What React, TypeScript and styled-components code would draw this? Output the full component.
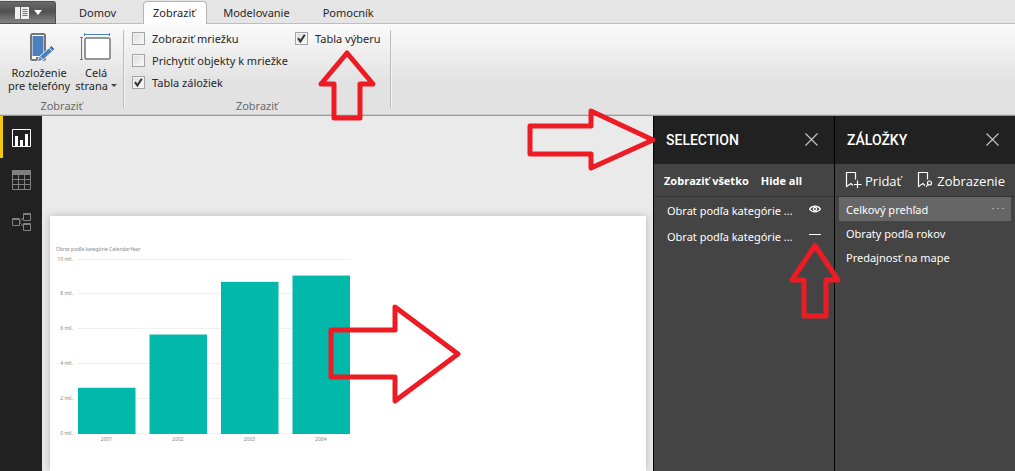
import React from 'react';
import styled, { createGlobalStyle } from 'styled-components';

const uiFont = `"Noto Sans", "Open Sans", sans-serif`;

const GlobalStyle = createGlobalStyle`
  *, *::before, *::after { box-sizing: border-box; }
  body { margin: 0; background: #eaeaea; font-family: ${uiFont}; font-size: 11px; color: #262626; }
  button, input { font: inherit; color: inherit; margin: 0; }
  button { border: 0; padding: 0; background: none; }
  ul { list-style: none; margin: 0; padding: 0; }
  h2, h3, p { margin: 0; }
`;

const Window = styled.div`
  position: relative;
  display: flex;
  flex-direction: column;
  min-height: 100vh;
  overflow: hidden;
`;

/* ---------- Ribbon ---------- */

const TabStrip = styled.nav`
  display: flex;
  align-items: flex-end;
  height: 24px;
  background: #e5e5e5;
  box-shadow: inset 0 -1px #bdbdbd;
`;

const FileButton = styled.button`
  display: flex;
  align-items: center;
  gap: 5px;
  width: 56px;
  height: 23px;
  margin-right: 7px;
  padding-left: 15px;
  border: 1px solid #4f4f4f;
  border-left: 0;
  border-radius: 0 3px 0 0;
  background: linear-gradient(#6a6a6a, #515151 45%, #848484);
`;

const Tab = styled.button<{ $active?: boolean }>`
  height: ${p => (p.$active ? 23 : 22)}px;
  margin-left: ${p => (p.$active ? 10 : 0)}px;
  padding: ${p => (p.$active ? '0 11px 0 9px' : '0 17px 1px 16px')};
  line-height: 22px;
  border: ${p => (p.$active ? '1px solid #b5b5b5' : '0')};
  border-bottom: 0;
  border-radius: 4px 4px 0 0;
  background: ${p => (p.$active ? '#fdfdfd' : 'transparent')};
`;

const Ribbon = styled.section`
  display: flex;
  height: 92px;
  padding-top: 6px;
  border-bottom: 1px solid #999;
  background: linear-gradient(#fbfbfb, #ededed 35%, #e2e2e2 65%, #e2e2e2);
  box-shadow: inset 0 -1px #cfcfcf;
`;

const Group = styled.div<{ $width: number }>`
  display: flex;
  flex-direction: column;
  justify-content: space-between;
  width: ${p => p.$width}px;
  height: 78px;
  border-right: 1px solid #bdbdbd;
  box-shadow: 1px 0 #f2f2f2;
`;

const GroupName = styled.p`
  height: 14px;
  margin-bottom: -5px;
  line-height: 14px;
  text-align: center;
  color: #6a6a6a;
`;

const LargeButtons = styled.div`
  display: flex;
  gap: 5px;
  padding-left: 8px;
`;

const LargeButton = styled.button`
  display: flex;
  flex-direction: column;
  align-items: center;
  line-height: 13px;
  white-space: nowrap;
  svg { margin-bottom: 4px; }
`;

const Caret = styled.span`
  display: inline-block;
  margin-left: 3px;
  vertical-align: 3px;
  border: solid transparent;
  border-width: 3px 3px 0;
  border-top-color: #444;
`;

const Checks = styled.div`
  display: grid;
  grid-template-columns: 163px auto;
  grid-auto-flow: column;
  grid-template-rows: repeat(3, 22px);
  align-items: start;
  padding: 2px 0 0 8px;
`;

const CheckLabel = styled.label`
  display: flex;
  align-items: center;
  gap: 7px;
  height: 13px;
  white-space: nowrap;
`;

const CheckBox = styled.span`
  display: grid;
  > * { grid-area: 1 / 1; }
  svg { pointer-events: none; }
`;

const CheckInput = styled.input`
  appearance: none;
  width: 13px;
  height: 13px;
  border: 1px solid #a3a3a3;
  background: linear-gradient(135deg, #dcdcdc, #fafafa);
  box-shadow: inset 0 0 0 1px #f4f4f4;
  & + svg { visibility: hidden; }
  &:checked + svg { visibility: visible; }
`;

function Check({ label, on }: { label: string; on?: boolean }) {
  return (
    <CheckLabel>
      <CheckBox>
        <CheckInput type="checkbox" defaultChecked={on} />
        <svg width="13" height="13" viewBox="0 0 13 13" fill="none" stroke="#333" strokeWidth="2">
          <path d="M3 6.2L5.4 9.4L9.8 2.8" />
        </svg>
      </CheckBox>
      {label}
    </CheckLabel>
  );
}

/* ---------- Workspace ---------- */

const Workspace = styled.div`
  display: flex;
  flex: 1;
`;

const SideNav = styled.nav`
  display: flex;
  flex-direction: column;
  width: 42px;
  background: #212121;
`;

const ViewButton = styled.button<{ $active?: boolean }>`
  display: grid;
  place-items: center;
  height: 42px;
  padding-top: 2px;
  padding-right: ${p => (p.$active ? 2 : 0)}px;
  border-left: ${p => (p.$active ? '3px solid #f2c80f' : '0')};
`;

const Canvas = styled.main`
  display: flex;
  flex: 1;
  min-width: 0;
  padding: 100px 7px 0 8px;
  background: #eaeaea;
`;

const ReportPage = styled.div`
  flex: 1;
  min-width: 0;
  padding: 30px 0 0 6px;
  background: #fff;
  box-shadow: 0 0 8px #b8b8b8;
`;

const ChartTitle = styled.h3`
  height: 7px;
  font: 400 5px/7px ${uiFont};
  color: #888;
`;

const Chart = styled.svg`
  display: block;
  max-width: 100%;
  font: 5px ${uiFont};
  fill: #888;
`;

const bars = [
  { year: '2001', value: 2.65 },
  { year: '2002', value: 5.7 },
  { year: '2003', value: 8.72 },
  { year: '2004', value: 9.08 },
];

function RevenueChart() {
  const base = 181;
  const unit = 17.45;
  return (
    <Chart width="300" height="192" viewBox="0 0 300 192" role="img" aria-label="Obrat podľa kategórie CalendarYear">
      {[0, 2, 4, 6, 8, 10].map(v => {
        const y = Math.round(base - v * unit);
        return (
          <g key={v}>
            <rect x="22" y={y - 1} width="272" height="1" fill="#f1f1f1" />
            <text x="17" y={y + 1} textAnchor="end">{v} mil.</text>
          </g>
        );
      })}
      {bars.map((b, i) => {
        const h = b.value * unit;
        const x = 22 + i * 71.5;
        return (
          <g key={b.year}>
            <rect x={x} y={base - h} width="57.5" height={h} fill="#01b8aa" />
            <text x={x + 28.5} y={base + 7} textAnchor="middle">{b.year}</text>
          </g>
        );
      })}
    </Chart>
  );
}

/* ---------- Panes ---------- */

const Pane = styled.aside`
  flex: none;
  width: 181px;
  border-left: 1px solid #000;
  background: #444;
  color: #fff;
`;

const PaneHeader = styled.header`
  display: flex;
  align-items: center;
  justify-content: space-between;
  height: 48px;
  padding: 0 16px 0 12px;
  background: #212121;
`;

const PaneTitle = styled.h2`
  font: 500 14px/20px Roboto, sans-serif;
`;

const PaneTools = styled.div<{ $gap: number }>`
  display: flex;
  align-items: center;
  gap: ${p => p.$gap}px;
  height: 33px;
  padding: 2px 0 0 10px;
  border-bottom: 1px solid #333;
  white-space: nowrap;
`;

const BoldTool = styled.button`
  font-family: "Open Sans", sans-serif;
  font-weight: 700;
  line-height: 16px;
`;

const IconTool = styled.button`
  display: flex;
  align-items: center;
  gap: 3px;
  font-family: "Open Sans", sans-serif;
  font-size: 13px;
  line-height: 16px;
  svg { margin-bottom: 4px; }
`;

const Layers = styled.ul`
  padding: 0 13px;
`;

const Layer = styled.li`
  display: flex;
  align-items: center;
  justify-content: space-between;
  height: 26px;
  white-space: nowrap;
`;

const Bookmarks = styled.ul`
  padding: 0 4px;
`;

const Bookmark = styled.li<{ $selected?: boolean }>`
  display: flex;
  align-items: center;
  justify-content: space-between;
  height: 24px;
  padding: 0 7px;
  background: ${p => (p.$selected ? '#666' : 'transparent')};
`;

const CloseButton = () => (
  <button aria-label="Zavrieť">
    <svg width="13" height="15" viewBox="0 0 13 15" stroke="#c8c8c8" strokeWidth="1.1" display="block">
      <path d="M.5 .5L12.5 12.5M12.5 .5L.5 12.5" />
    </svg>
  </button>
);

const BookmarkIcon = ({ view }: { view?: boolean }) => (
  <svg width="17" height="17" viewBox="0 0 17 17" fill="none" stroke="#fff" strokeWidth="1.2">
    <path d={view ? 'M8 14.500L6 12.600L1.500 15.500V1.500H10.500V8.500' : 'M8 14.500L6 12.500L1.500 15.500V1.500H10.500V8.500'} />
    {view ? (
      <>
        <circle cx="12.500" cy="12" r="2" />
        <path d="M11 13.500L9 16" />
      </>
    ) : (
      <path d="M12.500 9.500V17M9 13.500H16.500" />
    )}
  </svg>
);

/* ---------- Callout arrows drawn over the window ---------- */

const Callout = styled.svg<{ $top: number; $left?: number; $right?: number }>`
  position: absolute;
  top: ${p => p.$top}px;
  ${p => (p.$left !== undefined ? `left: ${p.$left}px;` : `right: ${p.$right}px;`)}
  fill: none;
  stroke: #ed1c24;
  stroke-width: 5;
  stroke-linejoin: round;
  pointer-events: none;
`;

export default function App() {
  return (
    <Window>
      <GlobalStyle />
      <TabStrip>
        <FileButton aria-label="Súbor">
          <svg width="14" height="12" viewBox="0 0 14 12">
            <path d="M0 0H14V12H0Z" fill="#eee" />
            <path d="M5.5 0V12" stroke="#666" />
            <path d="M7.5 2.5H12.5M7.5 4.5H12.5M7.5 6.5H12.5M7.5 8.5H12.5" stroke="#777" />
          </svg>
          <svg width="8" height="5" viewBox="0 0 8 5"><path d="M0 0H8L4 5Z" fill="#fff" /></svg>
        </FileButton>
        <Tab>Domov</Tab>
        <Tab $active>Zobraziť</Tab>
        <Tab>Modelovanie</Tab>
        <Tab>Pomocník</Tab>
      </TabStrip>

      <Ribbon>
        <Group $width={124}>
          <LargeButtons>
            <LargeButton>
              <svg width="32" height="32" viewBox="0 0 32 32">
                <rect x="8" y="4" width="14" height="26" rx="1.5" fill="#fff" stroke="#777" strokeWidth="2" />
                <rect x="9.500" y="6" width="11" height="20" fill="#4a80bd" />
                <path d="M13 28H17" stroke="#777" strokeWidth="2" />
                <path d="M14 32L16.500 26.500L28.500 15.500L32 19L20 30Z" fill="#4a80bd" stroke="#eee" />
                <path d="M26 18L29.500 21.500M17 26.500L20 30" stroke="#eee" />
              </svg>
              <span>Rozloženie<br />pre telefóny</span>
            </LargeButton>
            <LargeButton>
              <svg width="32" height="32" viewBox="0 0 32 32">
                <rect x="5" y="8" width="25" height="21" rx="1.5" fill="#fff" stroke="#777" strokeWidth="1.5" />
                <path d="M4.500 4.500H30M4.500 3V6M29.500 3V6M1.500 8V29M0 7.500H3M0 29.500H3" stroke="#4a80bd" />
              </svg>
              <span>Celá<br />strana<Caret /></span>
            </LargeButton>
          </LargeButtons>
          <GroupName>Zobraziť</GroupName>
        </Group>
        <Group $width={267}>
          <Checks>
            <Check label="Zobraziť mriežku" />
            <Check label="Prichytiť objekty k mriežke" />
            <Check label="Tabla záložiek" on />
            <Check label="Tabla výberu" on />
          </Checks>
          <GroupName>Zobraziť</GroupName>
        </Group>
      </Ribbon>

      <Workspace>
        <SideNav>
          <ViewButton $active aria-label="Zostava">
            <svg width="19" height="18" viewBox="0 0 19 18">
              <path d="M.5 .5H18.5V17.500H.5Z" fill="none" stroke="#fff" />
              <path d="M3 7H6V17H3ZM8 11H11V17H8ZM13 5H16V17H13Z" fill="#fff" />
            </svg>
          </ViewButton>
          <ViewButton aria-label="Údaje">
            <svg width="19" height="20" viewBox="0 0 19 20" fill="none" stroke="#808080">
              <path d="M0 0H19V5H0Z" fill="#808080" stroke="none" />
              <path d="M.5 4V19.500H18.500V4M6.500 4V19M12.500 4V19M0 9.500H19M0 14.500H19" />
            </svg>
          </ViewButton>
          <ViewButton aria-label="Vzťahy">
            <svg width="19" height="18" viewBox="0 0 19 18" fill="none" stroke="#808080">
              <path d="M.5 5.500H7.500V12.500H.5ZM11.500 .5H18.500V7.500H11.500ZM11.500 10.500H18.500V17.500H11.500Z" />
              <path d="M0 6.500H8M11 1.500H19M11 11.500H19" />
              <path d="M8 8.500L11 5M8 9.500L11 13" />
            </svg>
          </ViewButton>
        </SideNav>

        <Canvas>
          <ReportPage>
            <ChartTitle>Obrat podľa kategórie CalendarYear</ChartTitle>
            <RevenueChart />
          </ReportPage>
        </Canvas>

        <Pane>
          <PaneHeader>
            <PaneTitle>SELECTION</PaneTitle>
            <CloseButton />
          </PaneHeader>
          <PaneTools $gap={12}>
            <BoldTool>Zobraziť všetko</BoldTool>
            <BoldTool>Hide all</BoldTool>
          </PaneTools>
          <Layers>
            <Layer>
              Obrat podľa kategórie ...
              <svg width="12" height="12" viewBox="0 0 12 12" fill="none" stroke="#fff" strokeWidth="1.300">
                <path d="M.6 5C3 1.200 9 1.200 11.400 5C9 8.800 3 8.800 .6 5Z" />
                <circle cx="6" cy="5" r="1.600" />
              </svg>
            </Layer>
            <Layer>
              Obrat podľa kategórie ...
              <svg width="12" height="12" viewBox="0 0 12 12" stroke="#fff"><path d="M0 4.500H12" /></svg>
            </Layer>
          </Layers>
        </Pane>

        <Pane>
          <PaneHeader>
            <PaneTitle>ZÁLOŽKY</PaneTitle>
            <CloseButton />
          </PaneHeader>
          <PaneTools $gap={16}>
            <IconTool><BookmarkIcon />Pridať</IconTool>
            <IconTool><BookmarkIcon view />Zobrazenie</IconTool>
          </PaneTools>
          <Bookmarks>
            <Bookmark $selected>
              Celkový prehľad
              <svg width="12" height="2" viewBox="0 0 12 2" fill="#aaa"><path d="M0 0H2V1H0ZM5 0H7V1H5ZM10 0H12V1H10Z" /></svg>
            </Bookmark>
            <Bookmark>Obraty podľa rokov</Bookmark>
            <Bookmark>Predajnosť na mape</Bookmark>
          </Bookmarks>
        </Pane>
      </Workspace>

      <Callout $top={49} $left={317} width="60" height="72" viewBox="0 0 60 72">
        <path d="M30 4L56 35H43V69H17V35H4Z" />
      </Callout>
      <Callout $top={106} $right={358} width="132" height="68" viewBox="0 0 132 68">
        <path d="M5 20H66V5L128 34L66 62V48H5Z" />
      </Callout>
      <Callout $top={302} $left={326} width="138" height="104" viewBox="0 0 138 104">
        <path d="M5 28H69V5L132 52L69 99V75H5Z" />
      </Callout>
      <Callout $top={241} $right={173} width="54" height="80" viewBox="0 0 54 80">
        <path d="M27 4.500L50 39H38V75H16V39H4Z" />
      </Callout>
    </Window>
  );
}
